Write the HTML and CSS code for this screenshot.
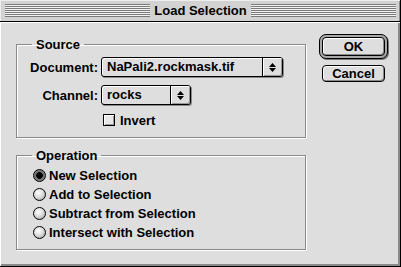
FILE: index.html
```html
<!DOCTYPE html>
<html lang="en">
<head>
    <meta charset="UTF-8">
    <meta name="viewport" content="width=device-width, initial-scale=1.0">
    <title>Load Selection</title>
    <link rel="stylesheet" href="styles.css">
</head>
<body>
    <div class="window">
        <div class="titlebar">
            <span class="stripes"></span>
            <span class="title">Load Selection</span>
            <span class="stripes"></span>
        </div>

        <div class="content">
            <div class="groups">
                <fieldset class="group source">
                    <legend>Source</legend>
                    <div class="form-grid">
                        <label class="field-label">Document:</label>
                        <div class="popup popup-doc">
                            <span class="popup-value">NaPali2.rockmask.tif</span>
                            <span class="popup-arrows">
                                <svg width="7" height="9" viewBox="0 0 7 9"><polygon points="3.5,0 7,4 0,4"/><polygon points="0,5 7,5 3.5,9"/></svg>
                            </span>
                        </div>

                        <label class="field-label">Channel:</label>
                        <div class="popup popup-channel">
                            <span class="popup-value">rocks</span>
                            <span class="popup-arrows">
                                <svg width="7" height="9" viewBox="0 0 7 9"><polygon points="3.5,0 7,4 0,4"/><polygon points="0,5 7,5 3.5,9"/></svg>
                            </span>
                        </div>

                        <div class="check-row"><span class="checkbox"></span>Invert</div>
                    </div>
                </fieldset>

                <fieldset class="group operation">
                    <legend>Operation</legend>
                    <ul class="radio-list">
                        <li class="radio-row"><span class="radio checked"></span>New Selection</li>
                        <li class="radio-row"><span class="radio"></span>Add to Selection</li>
                        <li class="radio-row"><span class="radio"></span>Subtract from Selection</li>
                        <li class="radio-row"><span class="radio"></span>Intersect with Selection</li>
                    </ul>
                </fieldset>
            </div>

            <div class="buttons">
                <div class="default-ring"><button class="btn btn-ok">OK</button></div>
                <button class="btn btn-cancel">Cancel</button>
            </div>
        </div>
    </div>
</body>
</html>
```

FILE: styles.css
```css
* {
    box-sizing: border-box;
}

body {
    margin: 0;
    font-family: "Liberation Sans", Arial, sans-serif;
    font-size: 13px;
    font-weight: bold;
    color: #000;
    background: #dedede;
}

.window {
    width: 401px;
    height: 267px;
    display: flex;
    flex-direction: column;
    background: #dedede;
    border-right: 1px solid #000;
    border-bottom: 1px solid #000;
}

/* title bar */
.titlebar {
    height: 22px;
    display: flex;
    align-items: center;
    padding: 0 4px 0 5px;
    background: #d2d2d2;
    border-bottom: 1px solid #000;
    box-shadow: inset 1px 1px 0 #eee, inset -1px 0 0 #888;
}

.stripes {
    flex: 1;
    height: 13px;
    background: repeating-linear-gradient(to bottom, #7a7a7a 0 1px, #f2f2f2 1px 2px);
}

.title {
    padding: 0 4px;
    line-height: 21px;
}

/* content */
.content {
    flex: 1;
    display: flex;
    align-items: flex-start;
    padding: 12px 0 0 16px;
    box-shadow: inset 1px 1px 0 #fff, inset -2px -2px 0 #8a8a8a;
}

.groups {
    width: 290px;
}

.group {
    margin: 0;
    padding: 0;
    border: 1px solid #8a8a8a;
    box-shadow: 1px 1px 0 #fff, inset 1px 1px 0 #fff;
}

.group legend {
    margin-left: 15px;
    padding: 0 4px;
    line-height: 15px;
}

.source {
    margin-top: 3px;
    padding: 5px 0 9px 0;
}

.operation {
    margin-top: 10px;
    padding: 3px 0 7px 0;
}

.form-grid {
    display: grid;
    grid-template-columns: 81px auto;
    column-gap: 3px;
    row-gap: 8px;
    align-items: center;
}

.field-label {
    text-align: right;
}

.popup {
    height: 20px;
    display: flex;
    align-items: stretch;
    border: 1px solid #000;
    border-radius: 3px;
    background: #dedede;
    box-shadow: 1px 1px 0 #8a8a8a, inset 1px 1px 0 #fff;
}

.popup-doc { width: 182px; }
.popup-channel { width: 90px; }

.popup-value {
    flex: 1;
    padding-left: 5px;
    line-height: 18px;
}

.popup-arrows {
    width: 20px;
    display: flex;
    align-items: center;
    justify-content: center;
    border-left: 1px solid #000;
    box-shadow: inset 1px 1px 0 #fff, inset -1px -1px 0 #999;
    border-radius: 0 2px 2px 0;
}

.check-row {
    grid-column: 2;
    height: 16px;
    display: flex;
    align-items: center;
    gap: 5px;
    margin-top: -1px;
    padding-left: 2px;
}

.checkbox {
    width: 12px;
    height: 12px;
    border: 1px solid #000;
    background: #e8e8e8;
    box-shadow: inset 1px 1px 0 #fff, inset -1px -1px 0 #999;
}

.radio-list {
    list-style: none;
    margin: 0;
    padding: 0 0 0 16px;
}

.radio-row {
    height: 19px;
    display: flex;
    align-items: center;
    gap: 3px;
}

.radio {
    width: 13px;
    height: 13px;
    border: 1px solid #000;
    border-radius: 50%;
    background: radial-gradient(circle at 40% 35%, #fff 0, #ddd 45%, #999 100%);
}

.radio.checked {
    background: radial-gradient(circle, #000 0 3px, #666 3.5px, #aaa 100%);
}

/* buttons */
.buttons {
    margin-left: 13px;
    display: flex;
    flex-direction: column;
    align-items: flex-start;
}

.default-ring {
    padding: 2px;
    border: 1px solid #000;
    border-radius: 7px;
    background: #a8a8a8;
    box-shadow: 1px 1px 0 #777;
}

.btn {
    width: 63px;
    padding: 0;
    font: inherit;
    color: #000;
    border: 1px solid #000;
    border-radius: 4px;
    background: #dedede;
    box-shadow: inset 1px 1px 0 #fff, inset -1px -1px 0 #8a8a8a;
}

.btn-ok {
    display: block;
    height: 19px;
}

.btn-cancel {
    height: 17px;
    margin: 6px 0 0 3px;
    line-height: 13px;
}
```
